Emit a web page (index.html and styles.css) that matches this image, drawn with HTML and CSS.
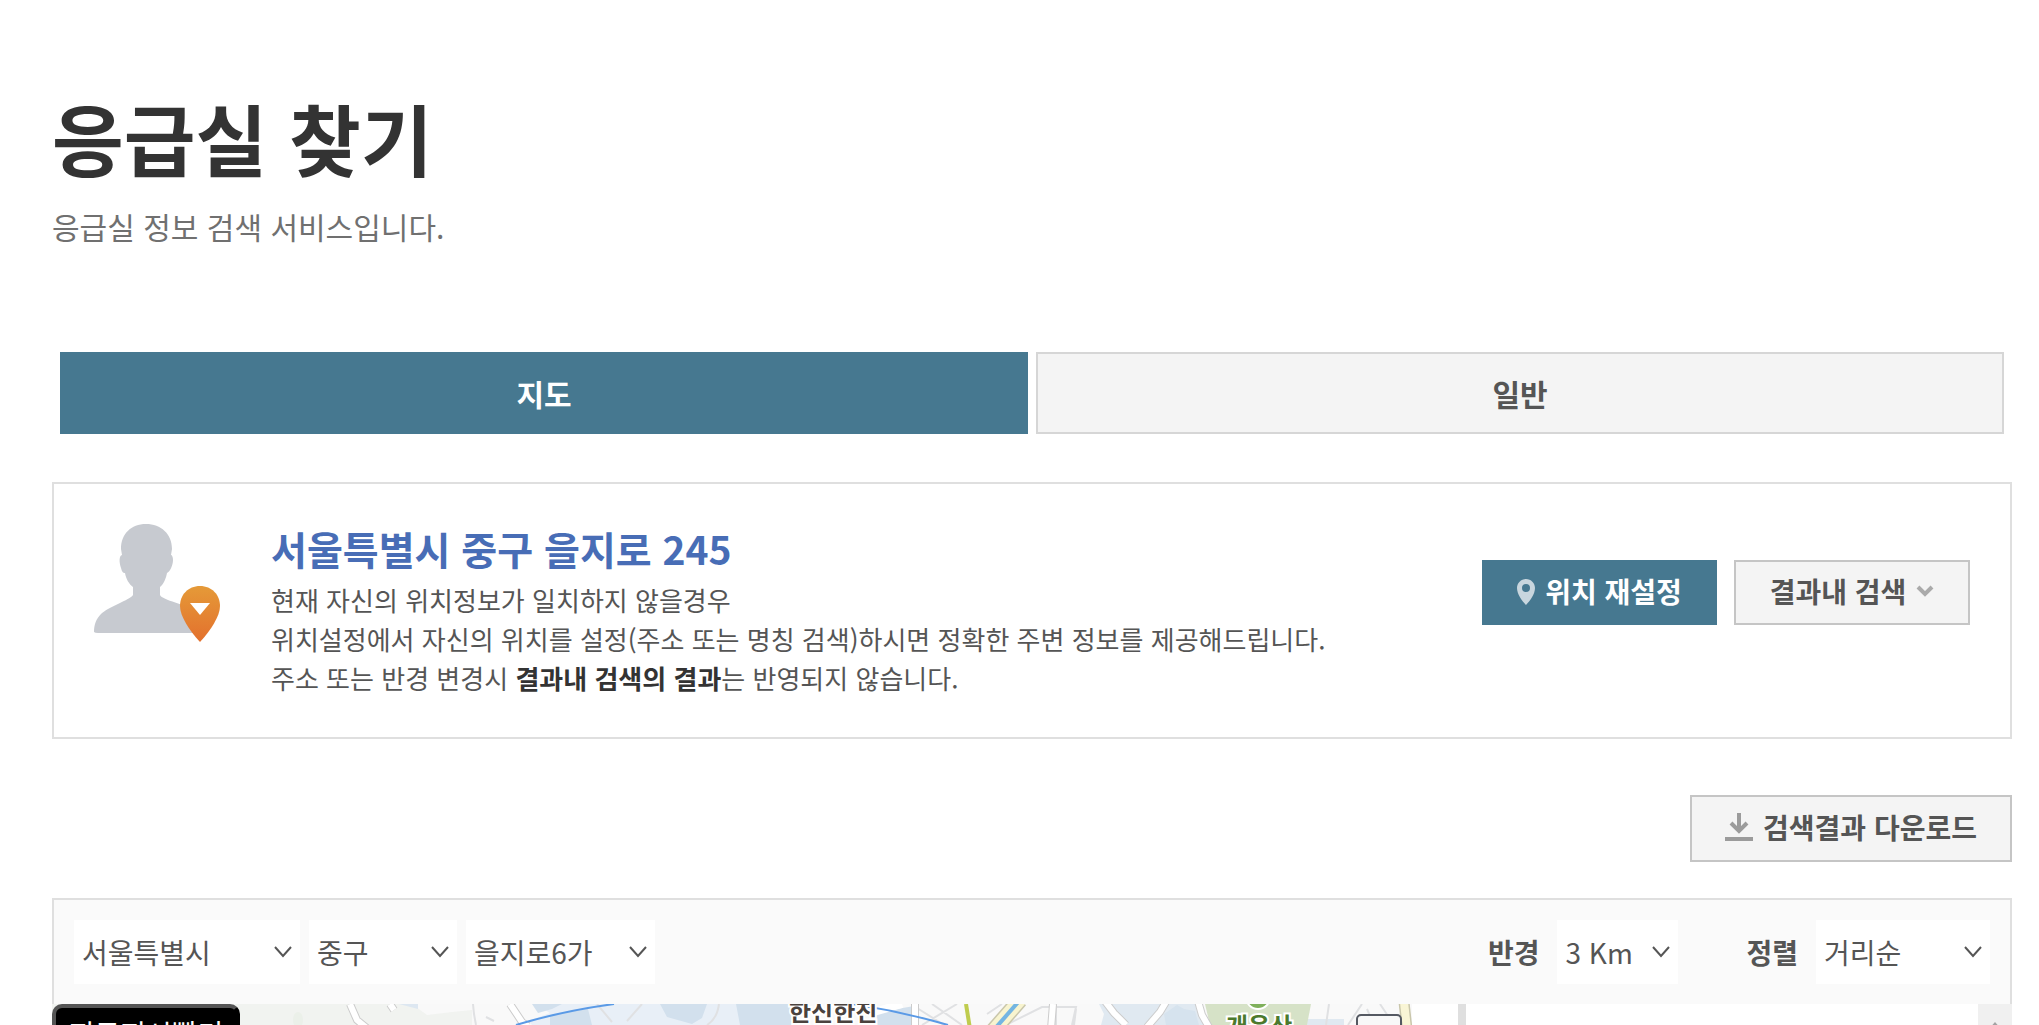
FILE: index.html
```html
<!DOCTYPE html>
<html lang="ko">

<head>
    <meta charset="UTF-8">
    <meta name="viewport" content="width=device-width, initial-scale=1.0">
    <title>응급실 찾기</title>
    <link rel="stylesheet" href="styles.css">
</head>

<body>
    <div class="page">
        <header class="page-head">
            <h1>응급실 찾기</h1>
            <p>응급실 정보 검색 서비스입니다.</p>
        </header>

        <nav class="tabs">
            <a href="#map" class="tab on">지도</a>
            <a href="#list" class="tab">일반</a>
        </nav>

        <section class="location">
            <svg class="user-icon" width="128" height="120" viewBox="0 0 128 120">
                <defs>
                    <linearGradient id="pin" x1="0" y1="0" x2="0" y2="1">
                        <stop offset="0" stop-color="#e59a38" />
                        <stop offset="1" stop-color="#e3702d" />
                    </linearGradient>
                </defs>
                <path fill="#c7cad0" d="M52 0C37 0 27 10 27 25L28 31C25 32 25 38 27 44C28 48 29 49 31 49C32 55 35 60 39 63V71C36 76 14 83 7 90C2 95 0 101 0 108Q1 109 4 109H101V86C93 81 68 76 66 71V63C70 60 72 54 73 49C76 48 79 41 79 36C79 33 78 31 77 31L78 25C78 10 67 0 52 0Z" />
                <path fill="url(#pin)" d="M106 62C94 62 86 71 86 82C86 92 95 106 106 118C117 106 126 92 126 82C126 71 118 62 106 62Z" />
                <path fill="#fff" d="M96 79H116L106 91Z" />
            </svg>
            <div class="location-text">
                <h2>서울특별시 중구 을지로 245</h2>
                <p>현재 자신의 위치정보가 일치하지 않을경우<br>
                    위치설정에서 자신의 위치를 설정(주소 또는 명칭 검색)하시면 정확한 주변 정보를 제공해드립니다.<br>
                    주소 또는 반경 변경시 <strong>결과내 검색의 결과</strong>는 반영되지 않습니다.</p>
            </div>
            <div class="location-btns">
                <button type="button" class="btn btn-primary">
                    <svg class="icon" width="18" height="28" viewBox="0 0 18 28">
                        <path fill="#c8d6de" fill-rule="evenodd" d="M9 2C4 2 0 6 0 11C0 17 5 24 9 28C13 24 18 17 18 11C18 6 14 2 9 2ZM9 7A4 4 0 1 1 9 15A4 4 0 1 1 9 7Z" />
                    </svg>
                    위치 재설정
                </button>
                <button type="button" class="btn">
                    결과내 검색
                    <svg class="icon" width="18" height="12" viewBox="0 0 18 12">
                        <path fill="none" stroke="#aaa" stroke-width="4" d="M2 2L9 9L16 2" />
                    </svg>
                </button>
            </div>
        </section>

        <div class="download">
            <button type="button" class="btn">
                <svg class="icon" width="28" height="30" viewBox="0 0 28 30">
                    <path fill="none" stroke="#9b9b9b" stroke-width="4" d="M14 1V18M6 11L14 19L22 11" />
                    <path fill="#9b9b9b" d="M0 25H28V29H0Z" />
                </svg>
                검색결과 다운로드
            </button>
        </div>

        <form class="filter">
            <select class="sido" aria-label="시도">
                <option>서울특별시</option>
            </select>
            <select class="gugun" aria-label="구군">
                <option>중구</option>
            </select>
            <select class="dong" aria-label="동">
                <option>을지로6가</option>
            </select>
            <label class="radius-label" for="radius">반경</label>
            <select class="radius" id="radius">
                <option>3 Km</option>
            </select>
            <label class="sort-label" for="sort">정렬</label>
            <select class="sort" id="sort">
                <option>거리순</option>
            </select>
        </form>

        <div class="result">
            <div class="map" id="map">
                <svg class="map-bg" width="100%" height="100%">
                    <rect width="100%" height="100%" fill="#f9f9f9" />
                    <path fill="#f1f3f0" d="M0 0H360L375 11L400 8L420 6V21H0Z" />
                    <path fill="#dde7f1" d="M347 0H366V5Z" />
                    <ellipse cx="246" cy="16" rx="5" ry="8" fill="#ebf0e9" />
                    <!-- 주거 지역 -->
                    <path fill="#e8eff7" d="M484 0H690V21H480L476 17L498 9Z" />
                    <path fill="#d2e0ed" d="M480 0L486 9L500 5L510 0ZM498 11L536 5L540 21H498ZM608 0H655L650 14L640 20L615 13ZM684 0H740V21H688ZM822 9L862 2V21H824Z" />
                    <path fill="#e0e9f1" d="M1047 0H1145L1152 21H1049L1052 10ZM1254 15H1292V21H1254Z" />
                    <path fill="#d6e3ee" d="M1112 10L1125 1L1132 5L1143 7L1147 21H1114Z" />
                    <path fill="#d6e2c7" d="M1153 0H1259L1255 21H1158Z" />
                    <!-- 골목길 -->
                    <path class="lane" d="M421 0L422 10L424 21M545 0L560 18M575 17L590 0M655 21Q665 15 667 0M434 13L442 17M865 4L892 21M870 21L905 0M880 0L910 21M935 10L950 0M954 21L990 3H1024L1020 21M1004 0V21M1024 5L1022 21M1277 0L1274 21M1296 21L1310 0M1315 5L1322 21M1328 0L1336 12" />
                    <path class="road-line" d="M298 0L305 16L316 25M338 0L342 6M458 0L470 18L476 22M863 0V25M1001 0L999 25M1052 -4L1062 9L1074 21M1095 23L1108 8L1114 -2M1146 -3L1150 11L1158 25" />
                    <path class="road" d="M298 0L305 16L316 25M338 0L342 6M458 0L470 18L476 22M863 0V25M1001 0L999 25M1052 -4L1062 9L1074 21M1095 23L1108 8L1114 -2M1146 -3L1150 11L1158 25" />
                    <path class="road wide" d="M822 8L850 0" />
                    <path fill="none" stroke="#bfcc4e" stroke-width="4" d="M914 0L918 25" />
                    <path fill="none" stroke="#c9c6ab" stroke-width="16" d="M968 -4L940 28" />
                    <path fill="none" stroke="#f8f4cf" stroke-width="13" d="M968 -4L940 28" />
                    <path fill="none" stroke="#73b5e2" stroke-width="4" d="M968 -4L940 28" />
                    <path fill="none" stroke="#c9c6ab" stroke-width="11" d="M1352 -2L1355 25" />
                    <path fill="none" stroke="#f9f5d5" stroke-width="8" d="M1352 -2L1355 25" />
                    <!-- 검색 반경 -->
                    <path fill="none" stroke="#5a9ae6" stroke-width="2" d="M464 21Q510 7 562 0M800 0Q848 7 896 21" />
                    <circle cx="1206" cy="-7" r="12" fill="#7fb05b" stroke="#fff" stroke-width="2" />
                    <text class="place" x="737" y="17">한신한진</text>
                    <text class="place park" x="1174" y="31">개운산</text>
                    <rect x="1305" y="11" width="44" height="44" rx="4" fill="#f8f8f8" stroke="#555962" stroke-width="2" />
                </svg>
                <button type="button" class="map-badge">지도지시빨기</button>
            </div>
            <div class="result-list" id="list">
                <div class="scroll">
                    <svg width="14" height="8" viewBox="0 0 14 8">
                        <path fill="#a3a3a3" d="M7 0L14 8H0Z" />
                    </svg>
                </div>
            </div>
        </div>
    </div>
</body>

</html>
```
FILE: styles.css
```css
* {
    box-sizing: border-box;
}

html,
body,
h1,
h2,
p {
    margin: 0;
    padding: 0;
}

body,
button,
select {
    font-family: "Noto Sans CJK KR", sans-serif;
    font-size: 28px;
    color: #555;
}

.page {
    display: flex;
    flex-direction: column;
    height: 100vh;
    min-height: 800px;
    padding: 92px 27px 0 52px;
    overflow: hidden;
}

.page-head h1 {
    font-size: 78px;
    line-height: 90px;
    color: #333;
}

.page-head p {
    margin-top: 22px;
    font-size: 30px;
    line-height: 44px;
    color: #707070;
}

/* 탭 */
.tabs {
    display: flex;
    gap: 8px;
    margin: 104px 8px 0;
}

.tab {
    flex: 1;
    height: 82px;
    border: 2px solid #d6d6d6;
    background: #f4f4f4;
    font-size: 30px;
    font-weight: bold;
    line-height: 78px;
    text-align: center;
    text-decoration: none;
    color: #555;
}

.tab.on {
    border-color: #467890;
    background: #467890;
    color: #fff;
}

/* 현재 위치 */
.location {
    display: flex;
    align-items: flex-start;
    margin-top: 48px;
    padding: 40px;
    border: 2px solid #dfdfdf;
}

.user-icon {
    flex: none;
    margin-right: 49px;
}

.location-text {
    flex: 1;
}

.location-text h2 {
    padding-bottom: 8px;
    font-size: 39px;
    line-height: 48px;
    color: #486db6;
}

.location-text p {
    font-size: 26px;
    line-height: 39px;
}

.location-text strong {
    color: #333;
}

.location-btns {
    display: flex;
    flex: none;
    gap: 17px;
    margin-top: 36px;
}

.btn {
    display: flex;
    align-items: center;
    justify-content: center;
    gap: 10px;
    width: 236px;
    height: 65px;
    padding: 0 0 3px;
    border: 2px solid #c5c5c5;
    background: #f4f4f4;
    font-weight: bold;
}

.btn-primary {
    width: 235px;
    border-color: #467890;
    background: #467890;
    color: #fff;
}

.download {
    display: flex;
    justify-content: flex-end;
    margin-top: 56px;
}

.download .btn {
    width: 322px;
    height: 67px;
}

/* 검색 조건 */
.filter {
    display: flex;
    align-items: center;
    margin-top: 36px;
    padding: 20px;
    border: 2px solid #dfdfdf;
    border-bottom: 0;
    background: #fafafa;
}

.filter select {
    height: 64px;
    padding: 0 8px;
    border: 0;
    border-radius: 0;
    appearance: none;
    background: #fff url("data:image/svg+xml,%3Csvg xmlns='http://www.w3.org/2000/svg' width='18' height='12'%3E%3Cpath fill='none' stroke='%23555' stroke-width='2' d='M1 1L9 10L17 1'/%3E%3C/svg%3E") no-repeat right 8px center;
}

.filter .sido {
    width: 226px;
}

.filter .gugun {
    width: 148px;
    margin: 0 9px;
}

.filter .dong {
    width: 189px;
}

.filter label {
    font-weight: bold;
}

.filter .radius-label {
    margin-left: auto;
}

.filter .radius {
    width: 121px;
    margin: 0 68px 0 18px;
}

.filter .sort {
    width: 174px;
    margin-left: 18px;
}

/* 지도, 결과 목록 */
.result {
    display: flex;
    flex: 1;
    min-height: 0;
    gap: 46px;
}

.map {
    position: relative;
    flex: 1;
    overflow: hidden;
}

.map-bg {
    display: block;
}

.lane {
    fill: none;
    stroke: #e0e1e3;
    stroke-width: 2;
}

.road-line {
    fill: none;
    stroke: #ccc;
    stroke-width: 8;
}

.road {
    fill: none;
    stroke: #fff;
    stroke-width: 6;
}

.road.wide {
    stroke-width: 8;
}

.place {
    font-size: 24px;
    font-weight: bold;
    fill: #4a423e;
    stroke: #fff;
    stroke-width: 4;
    paint-order: stroke;
}

.place.park {
    fill: #4b7a2d;
}

.map-badge {
    position: absolute;
    top: 0;
    left: 0;
    width: 188px;
    height: 58px;
    padding: 0;
    border: 4px solid #000;
    border-top-color: #555;
    border-left-color: #555;
    border-radius: 10px;
    background: #000;
    color: #fff;
}

.result-list {
    display: flex;
    flex: none;
    justify-content: flex-end;
    width: 554px;
    border-left: 8px solid #dfdfdf;
}

.scroll {
    width: 34px;
    padding-top: 14px;
    background: #f0f0f0;
    line-height: 0;
    text-align: center;
}
```
